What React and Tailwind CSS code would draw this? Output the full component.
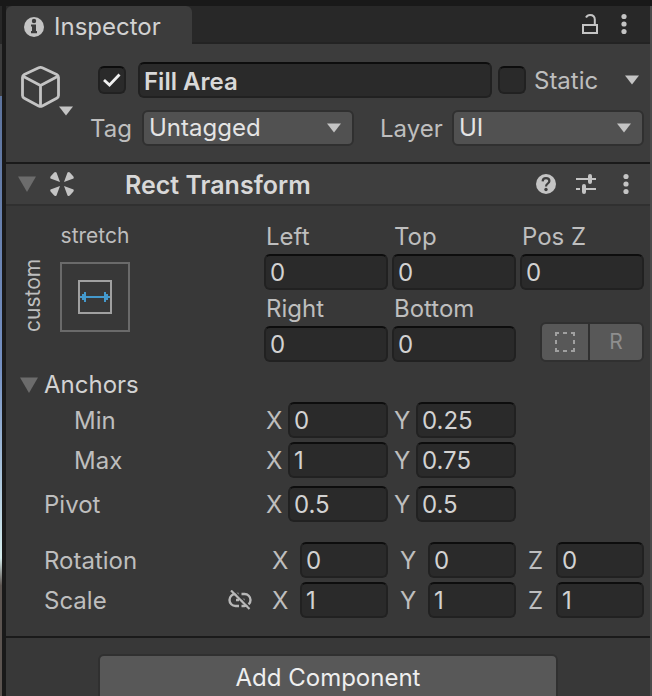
import React, { useId } from "react";

function Caret({ className = "" }) {
  return (
    <svg viewBox="0 0 16 10" className={`h-[10px] w-4 text-[#c4c4c4] ${className}`} aria-hidden="true">
      <path d="M1 0.5h14L8 9.5z" fill="currentColor" />
    </svg>
  );
}

function Foldout({ label }) {
  return (
    <button type="button" aria-label={label} className="flex h-[18px] w-[18px] shrink-0 items-center justify-center">
      <svg viewBox="0 0 18 16" className="h-4 w-[18px]" aria-hidden="true">
        <path d="M0 0.5h18L9 16z" fill="#6c6c6c" />
      </svg>
    </button>
  );
}

function Dots() {
  return (
    <svg viewBox="0 0 20 24" className="h-6 w-5" aria-hidden="true">
      <g fill="#c4c4c4">
        <circle cx="10" cy="4.500" r="2.600" />
        <circle cx="10" cy="12" r="2.600" />
        <circle cx="10" cy="19.500" r="2.600" />
      </g>
    </svg>
  );
}

function InfoIcon() {
  return (
    <svg viewBox="0 0 20 20" className="h-5 w-5" aria-hidden="true">
      <circle cx="10" cy="10" r="10" fill="#c4c4c4" />
      <circle cx="10" cy="4" r="2.200" fill="#3c3c3c" />
      <path d="M7 7.500h5v6.500h1v2.200H7V14h1V9.500H7z" fill="#3c3c3c" />
    </svg>
  );
}

function LockIcon() {
  return (
    <svg viewBox="0 0 20 24" className="h-6 w-5" aria-hidden="true">
      <g fill="none" stroke="#c4c4c4" strokeWidth="2">
        <rect x="3" y="13" width="14" height="8" />
        <path d="M6 5.5C7 3.6 8.2 3 10 3c3 0 4.800 1.800 4.800 4.600V13" />
      </g>
    </svg>
  );
}

function CubeIcon() {
  return (
    <svg viewBox="0 0 40 42" className="h-[42px] w-10" aria-hidden="true">
      <g fill="none" stroke="#c4c4c4" strokeWidth="2.800" strokeLinejoin="round">
        <path d="M18.700 1.800Q20.500 1 22.300 1.800L36.700 8.500Q38.500 9.400 38.500 11.400V29.600Q38.500 31.400 36.700 32.300L22.300 40Q20.500 40.900 18.700 40L4.300 32.300Q2.500 31.400 2.500 29.600V11.400Q2.500 9.400 4.300 8.500Z" />
        <path d="M3 10.200 20.500 19.500 38 10.200M20.500 19.500V40.500" />
      </g>
    </svg>
  );
}

function RectTransformIcon() {
  const blade = "M10 10 0.500 6.500Q-0.200 5.200 1 4L4.200 0.500Q5.200 -0.400 6.500 0.600Z";
  return (
    <svg viewBox="0 0 24 24" className="h-6 w-6" aria-hidden="true">
      <g fill="#c4c4c4">
        <path d={blade} />
        <path d={blade} transform="translate(24 0) scale(-1 1)" />
        <path d={blade} transform="translate(0 24) scale(1 -1)" />
        <path d={blade} transform="translate(24 24) scale(-1 -1)" />
      </g>
    </svg>
  );
}

function HelpIcon() {
  return (
    <svg viewBox="0 0 20 20" className="h-5 w-5" aria-hidden="true">
      <circle cx="10" cy="10" r="10" fill="#c4c4c4" />
      <path d="M6.600 7.400C6.700 5.300 8 4.200 10 4.200s3.400 1.100 3.400 2.900c0 2.300-3.400 2.600-3.400 5.300" fill="none" stroke="#3e3e3e" strokeWidth="2.200" />
      <circle cx="10" cy="15.500" r="1.700" fill="#3e3e3e" />
    </svg>
  );
}

function PresetIcon() {
  return (
    <svg viewBox="0 0 20 20" className="h-5 w-5" aria-hidden="true">
      <g stroke="#c4c4c4" fill="none">
        <path d="M0 5h14M14 5h6M0 15h4M8 15h12" strokeWidth="2" />
        <path d="M14 2v6M8 12v6" strokeWidth="4" strokeLinecap="round" />
      </g>
    </svg>
  );
}

function BrokenLinkIcon() {
  return (
    <svg viewBox="0 0 24 20" className="h-5 w-6" aria-hidden="true">
      <g fill="none" stroke="#b8b8b8" strokeWidth="2.400">
        <path d="M10.500 4H7.500a6 6 0 0 0 0 12H11" />
        <path d="M13.500 4H16.500a6 6 0 0 1 0 12H13.500" />
        <path d="M8 10h3M13.500 10h3" />
      </g>
      <path d="M5.500 0.500 23.500 18.500" stroke="#383838" strokeWidth="1.600" />
      <path d="M3 0.500 21.500 19" stroke="#b8b8b8" strokeWidth="2.200" />
    </svg>
  );
}

const fieldBox =
  "h-9 w-full min-w-0 rounded-md border-2 border-[#212121] border-t-[#0d0d0d] bg-[#2a2a2a] px-1 text-2xl leading-8 text-[#d2d2d2] outline-none";

function StackedField({ label, value }) {
  const id = useId();
  return (
    <div className="min-w-0">
      <label htmlFor={id} className="block h-9 pl-0.5 leading-[38px]">{label}</label>
      <input id={id} type="text" defaultValue={value} className={fieldBox} />
    </div>
  );
}

function AxisField({ name, axis, value, wide }) {
  const id = useId();
  return (
    <div className={wide ? "flex min-w-0 items-center pl-2" : "flex min-w-0 items-center pl-0.5"}>
      <label htmlFor={id} className={wide ? "w-7 shrink-0 pt-0.5" : "w-[22px] shrink-0 pt-0.5"}>{axis}</label>
      <input id={id} type="text" aria-label={`${name} ${axis}`} defaultValue={value} className={fieldBox} />
    </div>
  );
}

function PropertyRow({ name, values, indent, wide, icon, className = "" }) {
  return (
    <div role="group" aria-label={name} className={`flex items-center ${className}`}>
      <div className={`flex w-[258px] shrink-0 items-center justify-between pr-3 ${indent ? "pl-[68px]" : "pl-[38px]"}`}>
        <span className="pt-0.5">{name}</span>
        {icon}
      </div>
      <div className="grid flex-1 grid-cols-3 gap-1">
        {values.map((v, i) => (
          <AxisField key={i} name={name} axis={"XYZ"[i]} value={v} wide={wide} />
        ))}
      </div>
    </div>
  );
}

function CheckBox({ id, label, checked }) {
  return (
    <span className="relative block h-7 w-7 shrink-0">
      <input
        id={id}
        type="checkbox"
        aria-label={label}
        defaultChecked={checked}
        className="peer block h-7 w-7 appearance-none rounded-md border-2 border-[#212121] border-t-[#0d0d0d] bg-[#2a2a2a]"
      />
      <svg viewBox="0 0 28 28" className="pointer-events-none absolute inset-0 hidden h-7 w-7 peer-checked:block" aria-hidden="true">
        <path d="M6 14 11.500 19 21.500 8.500" fill="none" stroke="#f0f0f0" strokeWidth="2.800" />
      </svg>
    </span>
  );
}

function DropDown({ id, options, className }) {
  return (
    <span className={`relative block min-w-0 ${className}`}>
      <select
        id={id}
        className="block h-9 w-full appearance-none rounded-md border-2 border-[#303030] bg-[#515151] pr-8 pl-[5px] text-2xl leading-8 text-[#e4e4e4] outline-none"
      >
        {options.map((o) => (
          <option key={o}>{o}</option>
        ))}
      </select>
      <Caret className="pointer-events-none absolute top-[13px] right-3" />
    </span>
  );
}

function ObjectHeader() {
  return (
    <section className="flex border-b-2 border-[#1a1a1a] bg-[#3c3c3c] pt-[18px] pr-1.5 pb-4 pl-3.5">
      <button type="button" aria-label="Select icon" className="relative mt-1 h-[54px] w-[54px] shrink-0">
        <span className="absolute top-0 left-0"><CubeIcon /></span>
        <Caret className="absolute right-0 bottom-1" />
      </button>
      <div className="min-w-0 flex-1">
        <div className="flex items-center pl-6">
          <CheckBox label="Active" checked />
          <input
            type="text"
            aria-label="Name"
            defaultValue="Fill Area"
            className="mr-1.5 ml-3 h-9 min-w-0 flex-1 rounded-md border-2 border-[#212121] border-t-[#0d0d0d] bg-[#2a2a2a] px-1 pt-0.5 text-2xl leading-8 font-semibold text-[#d8d8d8] outline-none"
          />
          <CheckBox id="static" label="Static" />
          <label htmlFor="static" className="ml-2 w-[90px] pt-0.5">Static</label>
          <button type="button" aria-label="Static flags" className="mr-1 block">
            <Caret className="block" />
          </button>
        </div>
        <div className="mt-3 flex items-center pl-4">
          <label htmlFor="tag" className="w-[52px] shrink-0 pt-0.5">Tag</label>
          <DropDown id="tag" options={["Untagged", "Player"]} className="w-[212px]" />
          <label htmlFor="layer" className="ml-[26px] w-[72px] shrink-0 pt-0.5">Layer</label>
          <DropDown id="layer" options={["UI", "Default"]} className="flex-1" />
        </div>
      </div>
    </section>
  );
}

function AnchorPreset() {
  return (
    <div className="grid h-fit w-[258px] shrink-0 grid-cols-[54px_70px] grid-rows-[36px_70px] gap-y-2">
      <span className="col-start-2 text-center text-[21px] leading-9">stretch</span>
      <span className="col-start-1 row-start-2 rotate-180 justify-self-center text-center text-[21px] leading-7 [writing-mode:vertical-rl]">custom</span>
      <button type="button" aria-label="Anchor presets" className="col-start-2 row-start-2 flex items-center justify-center border-2 border-[#6a6a6a]">
        <svg viewBox="0 0 34 34" className="h-[34px] w-[34px]" aria-hidden="true">
          <rect x="1" y="1" width="32" height="32" fill="none" stroke="#a0a0a0" strokeWidth="2" />
          <g fill="#4499cc">
            <path d="M6 16h22v2H6z" />
            <path d="M2 16h2v-2h2v-2h2v10H6v-2H4v-2H2zM32 16h-2v-2h-2v-2h-2v10h2v-2h2v-2h2z" />
          </g>
        </svg>
      </button>
    </div>
  );
}

function ModeButtons() {
  const base = "flex h-10 items-center justify-center border-2 border-[#303030] bg-[#585858]";
  return (
    <div className="flex h-[72px] items-end justify-end">
      <button type="button" aria-label="Blueprint mode" className={`${base} w-[50px] rounded-l-md`}>
        <svg viewBox="0 0 20 20" className="h-5 w-5" aria-hidden="true">
          <path d="M1 4V1H4M8 1h4M16 1h3V4M19 8v4M19 16v3H16M12 19H8M4 19H1V16M1 12V8" fill="none" stroke="#a0a0a0" strokeWidth="2" />
        </svg>
      </button>
      <button type="button" className={`${base} -ml-0.5 w-14 rounded-r-md text-[21px] text-[#8e8e8e]`}>R</button>
    </div>
  );
}

function RectTransform() {
  return (
    <section className="border-b-2 border-[#1a1a1a]">
      <header className="flex h-[42px] items-center border-b-2 border-[#303030] bg-[#3e3e3e] pr-3.5 pl-3">
        <Foldout label="Toggle Rect Transform" />
        <span className="ml-3.5 block"><RectTransformIcon /></span>
        <h2 className="ml-[51px] flex-1 pt-0.5 text-[25px] font-semibold text-[#d8d8d8]">Rect Transform</h2>
        <div className="flex items-center gap-5">
          <button type="button" aria-label="Help"><HelpIcon /></button>
          <button type="button" aria-label="Presets"><PresetIcon /></button>
          <button type="button" aria-label="Component menu"><Dots /></button>
        </div>
      </header>
      <div className="pt-3 pr-1.5 pb-[18px]">
        <div className="flex">
          <AnchorPreset />
          <div className="grid flex-1 grid-cols-3 gap-x-1">
            <StackedField label="Left" value="0" />
            <StackedField label="Top" value="0" />
            <StackedField label="Pos Z" value="0" />
            <StackedField label="Right" value="0" />
            <StackedField label="Bottom" value="0" />
            <ModeButtons />
          </div>
        </div>
        <div className="mt-1.5 flex h-[34px] items-center gap-1.5 pl-3.5 text-[#d2d2d2]">
          <Foldout label="Toggle Anchors" />
          <span>Anchors</span>
        </div>
        <PropertyRow name="Min" values={["0", "0.25"]} indent />
        <PropertyRow name="Max" values={["1", "0.75"]} indent className="mt-1" />
        <PropertyRow name="Pivot" values={["0.5", "0.5"]} className="mt-2" />
        <PropertyRow name="Rotation" values={["0", "0", "0"]} wide className="mt-5" />
        <PropertyRow
          name="Scale"
          values={["1", "1", "1"]}
          wide
          className="mt-1"
          icon={<button type="button" aria-label="Constrain proportions"><BrokenLinkIcon /></button>}
        />
      </div>
    </section>
  );
}

export default function App() {
  return (
    <div className="flex h-screen overflow-hidden bg-[#191919] font-['Inter','Liberation_Sans',sans-serif] text-2xl leading-8 text-[#bebebe]">
      <div className="mr-1 flex w-0.5 shrink-0 flex-col pt-1.5">
        <div className="h-[38px] bg-[#282828]" />
        <div className="h-[52px] bg-[#3c3c3c]" />
        <div className="flex-[45] bg-linear-to-b from-[#5d739c] to-[#7590c2]" />
        <div className="flex-[32] bg-linear-to-b from-[#7590c2] to-[#d5ecec]" />
        <div className="flex-[23] bg-linear-to-b from-[#d5ecec] to-[#5c5450] to-20%" />
      </div>
      <main className="mt-1.5 flex min-w-0 flex-1 flex-col border-r-2 border-[#4a4a4a] bg-[#383838]">
        <div className="flex h-[38px] shrink-0 items-stretch bg-[#282828]">
          <div role="tab" aria-selected="true" className="flex w-[186px] items-center gap-2.5 rounded-t-md bg-[#3c3c3c] pt-1 pl-[18px] text-[#d2d2d2]">
            <InfoIcon />
            <span>Inspector</span>
          </div>
          <div className="flex flex-1 items-center justify-end gap-3.5 border-b-2 border-[#232323] pr-4">
            <button type="button" aria-label="Lock"><LockIcon /></button>
            <button type="button" aria-label="Tab menu"><Dots /></button>
          </div>
        </div>
        <ObjectHeader />
        <RectTransform />
        <footer className="flex justify-center px-4 pt-4">
          <button type="button" className="h-12 w-[460px] shrink rounded-md border-2 border-[#303030] bg-[#585858] text-[#eeeeee]">
            Add Component
          </button>
        </footer>
      </main>
    </div>
  );
}
